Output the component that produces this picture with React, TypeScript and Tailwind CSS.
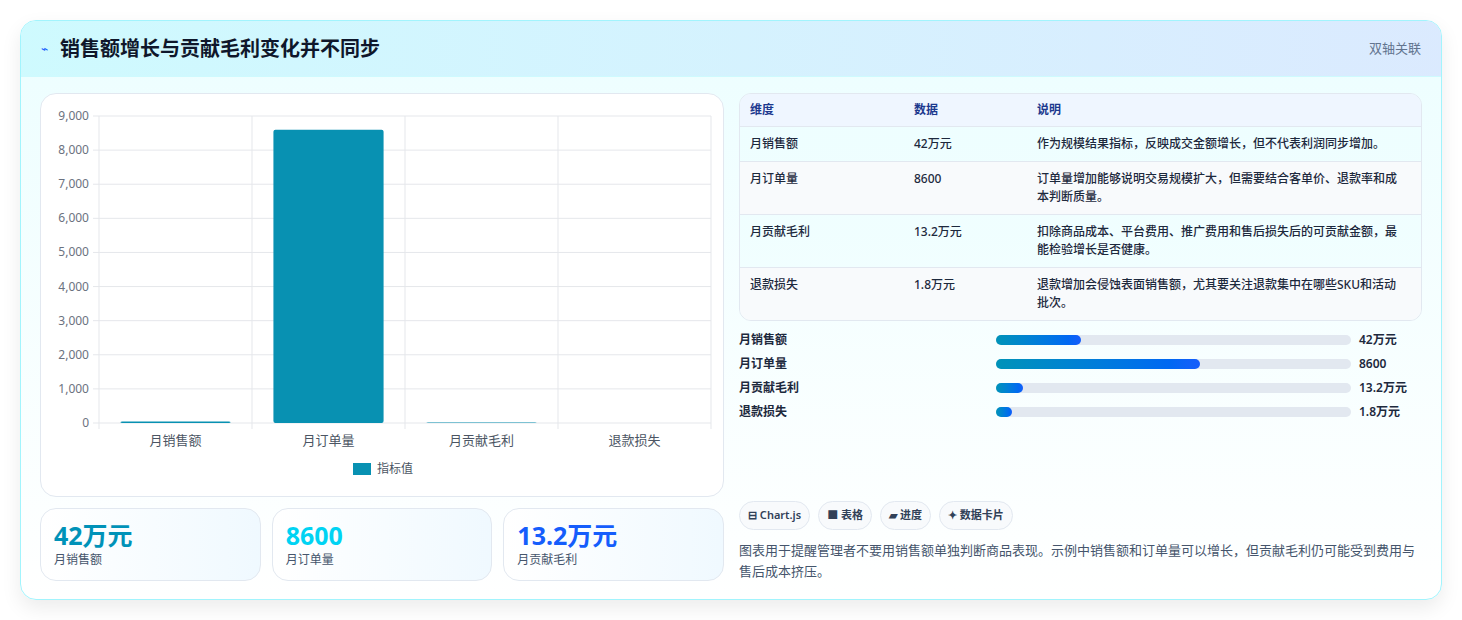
import React from "react";

const F = { fontFamily: '"Noto Sans", "Noto Sans CJK SC", sans-serif' };

function Chart() {
  const x0 = 58, x1 = 670, y0 = 22, y1 = 329;
  const h = y1 - y0;
  const cats = ["月销售额", "月订单量", "月贡献毛利", "退款损失"];
  const vals = [42, 8600, 13.2, 1.8];
  const cw = (x1 - x0) / 4;
  return (
    <svg width="683" height="403" className="block">
      {Array.from({ length: 10 }).map((_, i) => {
        const y = y1 - (i * h) / 9;
        return (
          <g key={i}>
            <line x1={x0 - 6} x2={x1} y1={y} y2={y} stroke="#e5e7eb" />
            <text x={x0 - 10} y={y + 4} fontSize="12" textAnchor="end" fill="#6b7280">
              {(i * 1000).toLocaleString("en-US")}
            </text>
          </g>
        );
      })}
      {[0, 1, 2, 3, 4].map((i) => (
        <line key={i} x1={x0 + i * cw} x2={x0 + i * cw} y1={y0} y2={y1 + 6} stroke="#e5e7eb" />
      ))}
      {vals.map((v, i) => {
        const bh = (v / 9000) * h;
        const bx = x0 + i * cw + cw * 0.14;
        const bw = cw * 0.72;
        return <rect key={i} x={bx} y={y1 - bh} width={bw} height={Math.max(bh, 0)} rx="2" fill="#0891b2" />;
      })}
      {cats.map((c, i) => (
        <text key={c} x={x0 + i * cw + cw / 2} y={y1 + 22} fontSize="13" textAnchor="middle" fill="#4b5563">
          {c}
        </text>
      ))}
      <rect x="312" y="369" width="18" height="12" fill="#0891b2" />
      <text x="336" y="379" fontSize="12" fill="#4b5563">指标值</text>
    </svg>
  );
}

const rows = [
  ["月销售额", "42万元", "作为规模结果指标，反映成交金额增长，但不代表利润同步增加。"],
  ["月订单量", "8600", "订单量增加能够说明交易规模扩大，但需要结合客单价、退款率和成本判断质量。"],
  ["月贡献毛利", "13.2万元", "扣除商品成本、平台费用、推广费用和售后损失后的可贡献金额，最能检验增长是否健康。"],
  ["退款损失", "1.8万元", "退款增加会侵蚀表面销售额，尤其要关注退款集中在哪些SKU和活动批次。"],
];

const bars = [
  ["月销售额", 24, "42万元"],
  ["月订单量", 57.5, "8600"],
  ["月贡献毛利", 7.5, "13.2万元"],
  ["退款损失", 4.5, "1.8万元"],
] as const;

export default function App() {
  return (
    <div className="w-[1462px] h-[620px] bg-white pt-5 px-5" style={F}>
      <div className="w-[1422px] h-[580px] rounded-2xl border border-cyan-200 overflow-hidden shadow-[0_8px_20px_rgba(0,0,0,0.08)] bg-gradient-to-b from-cyan-50 to-white">
        <div className="h-[56px] flex items-center justify-between px-5 bg-gradient-to-r from-cyan-100 to-blue-100 border-b border-cyan-100">
          <div className="flex items-center gap-3">
            <span className="text-blue-600 text-[12px]">⌁</span>
            <span className="text-[20px] font-bold text-slate-900">销售额增长与贡献毛利变化并不同步</span>
          </div>
          <span className="text-[13px] text-slate-500">双轴关联</span>
        </div>
        <div className="flex gap-[15px] px-[19px] pt-4">
          <div className="w-[684px] flex flex-col gap-[11px]">
            <div className="h-[404px] rounded-2xl border border-slate-200 bg-white">
              <Chart />
            </div>
            <div className="flex gap-[11px]">
              {[
                ["42万元", "text-cyan-600", "月销售额"],
                ["8600", "text-cyan-400", "月订单量"],
                ["13.2万元", "text-blue-600", "月贡献毛利"],
              ].map(([v, c, l]) => (
                <div key={l} className="flex-1 h-[73px] rounded-2xl border border-slate-200 bg-gradient-to-r from-white to-sky-50 px-[13px] pt-[10px]">
                  <div className={`text-[25px] font-bold leading-[32px] ${c}`}>{v}</div>
                  <div className="text-[12px] text-slate-600">{l}</div>
                </div>
              ))}
            </div>
          </div>
          <div className="w-[684px] flex flex-col">
            <div className="rounded-xl border border-slate-200 overflow-hidden text-[12px] text-slate-800">
              <div className="flex h-[33px] items-center bg-blue-50 border-b border-slate-200 font-bold text-blue-900">
                <div className="w-[174px] pl-[10px]">维度</div>
                <div className="w-[123px]">数据</div>
                <div className="flex-1">说明</div>
              </div>
              {rows.map(([a, b, c], i) => (
                <div key={a} className={`flex py-[8px] ${i > 0 ? "border-t border-slate-200" : ""} ${i % 2 ? "bg-slate-50" : "bg-cyan-50/40"}`}>
                  <div className="w-[174px] pl-[10px] font-medium">{a}</div>
                  <div className="w-[123px] font-medium">{b}</div>
                  <div className="flex-1 pr-[14px] font-medium leading-[18px]">{c}</div>
                </div>
              ))}
            </div>
            <div className="mt-[10px] flex flex-col gap-[6px]">
              {bars.map(([l, p, v]) => (
                <div key={l} className="flex items-center h-[18px] text-[12px] font-semibold text-slate-800">
                  <div className="w-[257px]">{l}</div>
                  <div className="w-[355px] h-[10px] rounded-full bg-slate-200">
                    <div className="h-full rounded-full bg-gradient-to-r from-cyan-600 to-blue-600" style={{ width: `${p}%` }} />
                  </div>
                  <div className="ml-2">{v}</div>
                </div>
              ))}
            </div>
            <div className="mt-[80px] flex gap-2 text-[11px] font-semibold text-slate-700">
              {["⊟ Chart.js", "■ 表格", "▰ 进度", "✦ 数据卡片"].map((t) => (
                <span key={t} className="h-[29px] px-[8px] flex items-center rounded-full border border-slate-200 bg-slate-50">{t}</span>
              ))}
            </div>
            <p className="mt-[10px] text-[13px] leading-[21px] text-slate-600">
              图表用于提醒管理者不要用销售额单独判断商品表现。示例中销售额和订单量可以增长，但贡献毛利仍可能受到费用与售后成本挤压。
            </p>
          </div>
        </div>
      </div>
    </div>
  );
}
